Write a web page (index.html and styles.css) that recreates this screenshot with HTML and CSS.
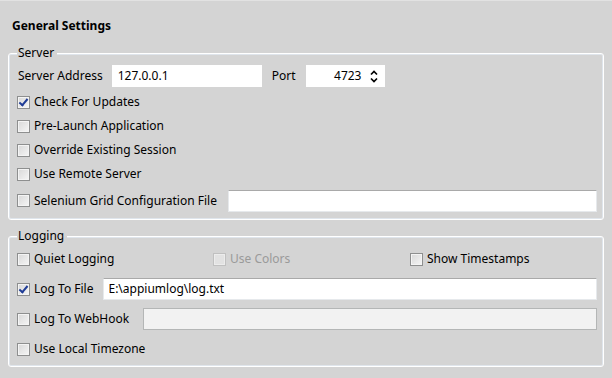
FILE: index.html
```html
<!DOCTYPE html>
<html>
<head>
<meta charset="utf-8">
<link rel="stylesheet" href="styles.css">
</head>
<body>
<div class="page">
  <div class="title">General Settings</div>

  <fieldset class="group server">
    <legend>Server</legend>
    <div class="row addr-row">
      <span class="lbl addr-lbl">Server Address</span>
      <div class="field addr">127.0.0.1</div>
      <span class="lbl port-lbl">Port</span>
      <div class="field spin">
        <span class="spin-val">4723</span>
        <svg class="spin-arrows" width="8" height="13" viewBox="0 0 8 13">
          <path d="M1 4.5 L4 1.5 L7 4.5" fill="none" stroke="#000" stroke-width="1.7"/>
          <path d="M1 8.5 L4 11.5 L7 8.5" fill="none" stroke="#000" stroke-width="1.7"/>
        </svg>
      </div>
    </div>
    <div class="row chk-row"><span class="cb checked"></span><span class="lbl">Check For Updates</span></div>
    <div class="row chk-row"><span class="cb"></span><span class="lbl">Pre-Launch Application</span></div>
    <div class="row chk-row"><span class="cb"></span><span class="lbl">Override Existing Session</span></div>
    <div class="row chk-row"><span class="cb"></span><span class="lbl">Use Remote Server</span></div>
    <div class="row sel-row"><span class="cb"></span><span class="lbl">Selenium Grid Configuration File</span><div class="field grow sel-field"></div></div>
  </fieldset>

  <fieldset class="group logging">
    <legend>Logging</legend>
    <div class="row log-row three">
      <div class="opt quiet"><span class="cb"></span><span class="lbl">Quiet Logging</span></div>
      <div class="opt colors"><span class="cb disabled"></span><span class="lbl dis">Use Colors</span></div>
      <div class="opt stamps"><span class="cb"></span><span class="lbl">Show Timestamps</span></div>
    </div>
    <div class="row log-row"><span class="cb checked"></span><span class="lbl">Log To File</span><div class="field grow file-field">E:\appiumlog\log.txt</div></div>
    <div class="row log-row"><span class="cb"></span><span class="lbl">Log To WebHook</span><div class="field grow hook-field off"></div></div>
    <div class="row log-row"><span class="cb"></span><span class="lbl">Use Local Timezone</span></div>
  </fieldset>
</div>
</body>
</html>
```

FILE: styles.css
```css
html, body {
  margin: 0;
  padding: 0;
  background: #d4d4d4;
}
.page {
  width: 612px;
  height: 378px;
  box-sizing: border-box;
  border-top: 1px solid #e2e2e2;
  font-family: "Noto Sans", "Open Sans", sans-serif;
  font-size: 12px;
  color: #000;
}
.title {
  padding: 17px 12px 0;
  line-height: 16px;
  font-weight: bold;
}
.group {
  margin: 11px 0 0 8px;
  width: 596px;
  box-sizing: border-box;
  border: 1px solid #ffffff;
  box-shadow: inset 0 0 0 1px #dfe5ec;
  border-radius: 3px;
  padding: 0 6px 0 8px;
}
.group legend {
  padding: 0 3px 0 1px;
  margin-left: 0;
  line-height: 16px;
  background: #d4d4d4;
}
.server { padding-top: 4px; padding-bottom: 6px; height: 175px; }
.logging { margin-top: 8px; padding-top: 0; height: 139px; }

.row {
  display: flex;
  align-items: center;
}
.addr-row { height: 22px; }
.chk-row { height: 24px; }
.addr-row + .chk-row { margin-top: 3px; }
.sel-row { height: 23px; margin-top: 3px; }
.log-row { height: 30px; }

.lbl { line-height: 16px; white-space: nowrap; }
.addr-lbl { margin-left: 1px; }
.field {
  box-sizing: border-box;
  height: 22px;
  background: #fff;
  border: 1px solid #fff;
  border-top-color: #a9a9a9;
  line-height: 20px;
  padding: 0 4px;
  white-space: nowrap;
}
.addr { width: 150px; margin-left: 9px; border-color: #fff; padding-left: 5px; }
.port-lbl { margin-left: 10px; }
.spin {
  width: 79px;
  margin-left: 11px;
  border-color: #fff;
  display: flex;
  align-items: center;
  justify-content: flex-end;
  padding-right: 6px;
}
.spin-val { margin-right: 9px; }
.spin-arrows { display: block; }
.grow { flex: 1; }
.sel-field { margin-left: 11px; border-color: #e6e9ec; border-top-color: #a9a9a9; }
.file-field { margin-left: 10px; border-color: #e6e9ec; border-top-color: #a9a9a9; }
.hook-field { margin-left: 14px; }
.off { background: #f2f2f2; border: 1px solid #b4b6b6; }

.cb {
  box-sizing: border-box;
  width: 13px;
  height: 13px;
  flex: none;
  margin: 0 4px 0 0;
  border: 1px solid #8e8f8f;
  background: linear-gradient(135deg, #d8d8d8, #f6f6f6);
  box-shadow: inset 0 0 0 1px #f4f4f4;
  position: relative;
}
.cb.checked::after {
  content: "";
  position: absolute;
  left: 3px;
  top: 0px;
  width: 3px;
  height: 7px;
  border: solid #1f3c96;
  border-width: 0 2px 2px 0;
  transform: rotate(40deg);
}
.cb.disabled {
  border-color: #c0c0c0;
  background: #e2e2e2;
  box-shadow: inset 0 0 0 1px #ececec;
}
.dis { color: #9a9a9a; }
.three .opt { display: flex; align-items: center; flex: none; }
.three .quiet { width: 196px; }
.three .colors { width: 197px; }
```
